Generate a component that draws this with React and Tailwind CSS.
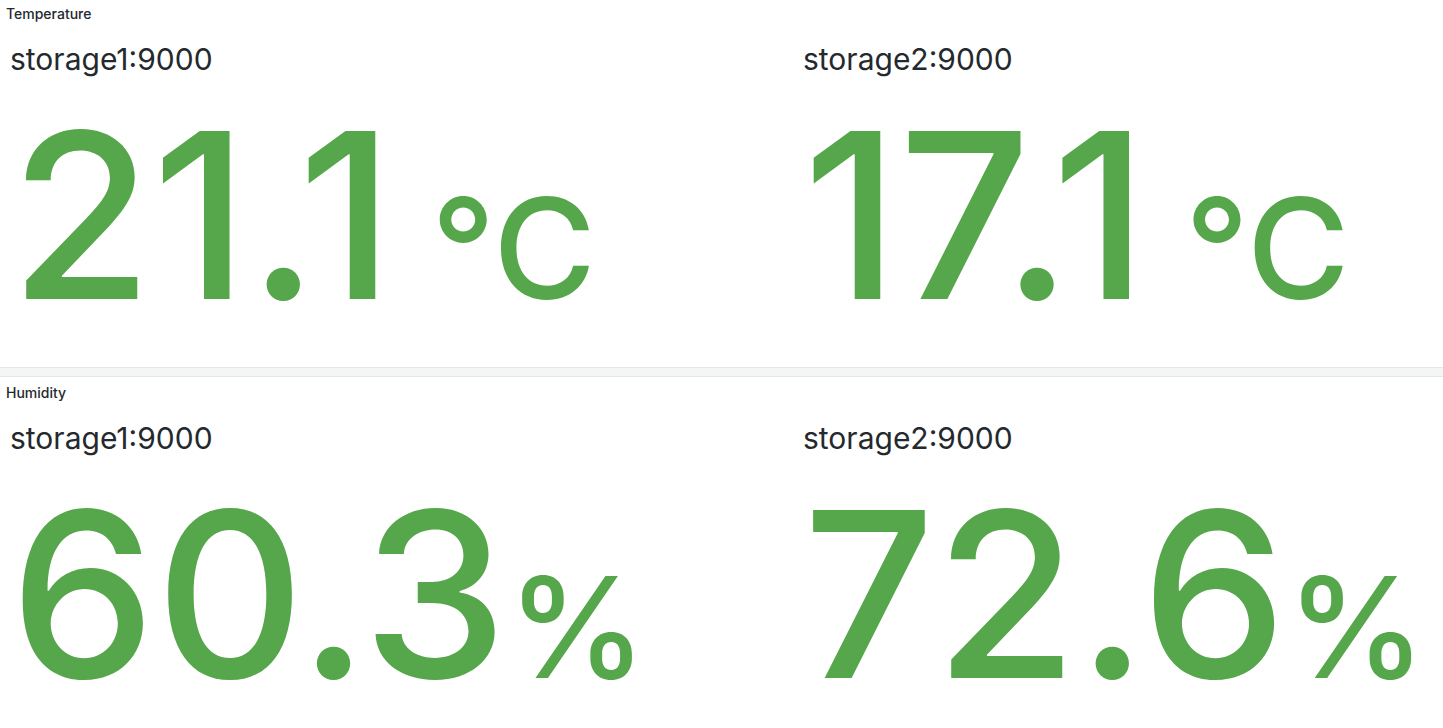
import React from "react";

const panels = [
  {
    title: "Temperature",
    unit: " °C",
    items: [
      { name: "storage1:9000", value: "21.1" },
      { name: "storage2:9000", value: "17.1" },
    ],
  },
  {
    title: "Humidity",
    unit: "%",
    items: [
      { name: "storage1:9000", value: "60.3" },
      { name: "storage2:9000", value: "72.6" },
    ],
  },
];

const Stat = ({ name, value, unit }) => {
  return (
    <div className="pl-[10px] pr-[8px]">
      <div className="mt-[16px] text-[30px] leading-none text-[#24292e] whitespace-nowrap">
        {name}
      </div>
      <div className="mt-[26px] text-[231px] leading-none font-medium text-[#56a64b] whitespace-pre">
        {value}
        <span className="text-[140px]">{unit}</span>
      </div>
    </div>
  );
};

const Panel = ({ title, unit, items }) => {
  return (
    <div className="h-[367px] bg-white overflow-hidden">
      <div className="h-[28px] px-[6px] text-[14px] leading-[28px] font-medium text-[#24292e]">
        {title}
      </div>
      <div className="grid grid-cols-[793px_1fr]">
        {items.map((item) => (
          <Stat key={item.name} name={item.name} value={item.value} unit={unit} />
        ))}
      </div>
    </div>
  );
};

const App = () => {
  return (
    <div
      className="w-full h-[728px] overflow-hidden bg-white"
      style={{ fontFamily: "Inter, 'Noto Sans', sans-serif" }}
    >
      <Panel {...panels[0]} />
      <div className="h-[10px] bg-[#f4f5f5] border-y border-[#e4e6e8]" />
      <div className="pt-[2px]">
        <Panel {...panels[1]} />
      </div>
    </div>
  );
};

export default App;
